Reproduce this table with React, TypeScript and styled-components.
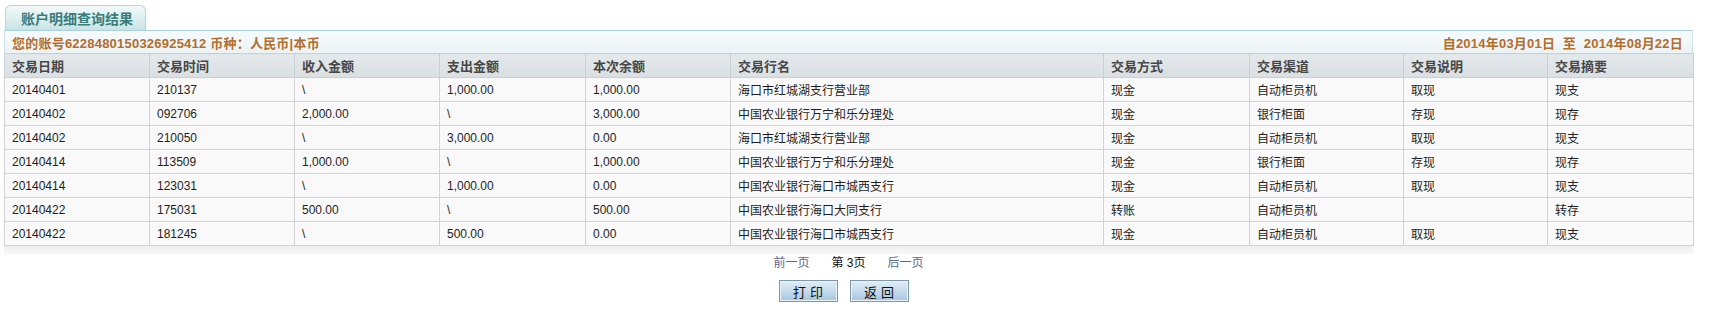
import React from 'react';
import styled, { createGlobalStyle } from 'styled-components';

const GlobalStyle = createGlobalStyle`
  body {
    margin: 0;
    background: #ffffff;
    font-family: "Liberation Sans", Arial, "Noto Sans CJK SC", sans-serif;
  }
`;

const columns = [
  { title: '交易日期', width: 145 },
  { title: '交易时间', width: 145 },
  { title: '收入金额', width: 145 },
  { title: '支出金额', width: 146 },
  { title: '本次余额', width: 145 },
  { title: '交易行名', width: 373 },
  { title: '交易方式', width: 146 },
  { title: '交易渠道', width: 154 },
  { title: '交易说明', width: 144 },
  { title: '交易摘要', width: 146 },
];

const rows = [
  ['20140401', '210137', '\\', '1,000.00', '1,000.00', '海口市红城湖支行营业部', '现金', '自动柜员机', '取现', '现支'],
  ['20140402', '092706', '2,000.00', '\\', '3,000.00', '中国农业银行万宁和乐分理处', '现金', '银行柜面', '存现', '现存'],
  ['20140402', '210050', '\\', '3,000.00', '0.00', '海口市红城湖支行营业部', '现金', '自动柜员机', '取现', '现支'],
  ['20140414', '113509', '1,000.00', '\\', '1,000.00', '中国农业银行万宁和乐分理处', '现金', '银行柜面', '存现', '现存'],
  ['20140414', '123031', '\\', '1,000.00', '0.00', '中国农业银行海口市城西支行', '现金', '自动柜员机', '取现', '现支'],
  ['20140422', '175031', '500.00', '\\', '500.00', '中国农业银行海口大同支行', '转账', '自动柜员机', '', '转存'],
  ['20140422', '181245', '\\', '500.00', '0.00', '中国农业银行海口市城西支行', '现金', '自动柜员机', '取现', '现支'],
];

const Page = styled.div`
  padding: 5px 21px 0 4px;
  width: 1689px;
`;

const TabRow = styled.div`
  display: flex;
  padding-left: 1px;
`;

const Tab = styled.div`
  width: 141px;
  height: 25px;
  box-sizing: border-box;
  padding-left: 15px;
  border: 1px solid #b9d6d6;
  border-bottom: none;
  border-radius: 6px 6px 0 0;
  background: linear-gradient(to bottom, #f2f9f9 0%, #d9eeed 60%, #c8e3e2 100%);
  color: #3b7b79;
  font-size: 14px;
  font-weight: bold;
  line-height: 25px;
  font-family: "Noto Sans CJK SC", sans-serif;
`;

const InfoBar = styled.div`
  display: flex;
  justify-content: space-between;
  align-items: center;
  height: 23px;
  box-sizing: border-box;
  padding: 0 9px 0 7px;
  border-top: 1px solid #a9d1dc;
  border-left: 1px solid #cfe3e8;
  border-right: 1px solid #cfe3e8;
  background: linear-gradient(to bottom, #f8fbfc, #ebf3f6);
  color: #b36d2c;
  font-size: 13px;
  font-weight: bold;
  letter-spacing: 0.22px;
  font-family: "Liberation Sans", Arial, "Noto Sans CJK SC", sans-serif;
  white-space: pre;
`;

const Table = styled.table`
  width: 1689px;
  border-collapse: collapse;
  table-layout: fixed;
`;

const HeadCell = styled.th`
  height: 24px;
  padding: 0 0 0 7px;
  box-sizing: border-box;
  border: 1px solid #c9d0d3;
  background: linear-gradient(to bottom, #e4e9eb, #d9dfe2);
  color: #474747;
  font-size: 13px;
  font-weight: bold;
  text-align: left;
  font-family: "Noto Sans CJK SC", sans-serif;
`;

const Cell = styled.td`
  height: 24px;
  padding: 0 0 0 7px;
  box-sizing: border-box;
  border: 1px solid #d2d2d2;
  background: #f9f9f9;
  color: #1e1e1e;
  font-size: 12px;
  white-space: nowrap;
  overflow: hidden;
`;

const TableShade = styled.div`
  height: 8px;
  background: linear-gradient(to bottom, #efefef, #f8f8f8);
`;

const Pager = styled.div`
  display: flex;
  justify-content: center;
  gap: 22px;
  height: 18px;
  line-height: 18px;
  font-size: 12px;
  font-family: "Liberation Sans", Arial, "Noto Sans CJK SC", sans-serif;
`;

const PagerLink = styled.span<{ current?: boolean }>`
  color: ${({ current }) => (current ? '#111111' : '#5b6890')};
`;

const ButtonRow = styled.div`
  display: flex;
  justify-content: center;
  gap: 12px;
  margin-top: 8px;
  padding-right: 10px;
`;

const Button = styled.button`
  width: 59px;
  height: 22px;
  padding: 0;
  border: 1px solid #7f98a8;
  box-shadow: inset 0 0 0 1px #e8f1f8;
  background: linear-gradient(to bottom, #e0edf6 0%, #c2d9ea 55%, #a8c6dc 100%);
  color: #111111;
  font-size: 13px;
  letter-spacing: 4px;
  text-indent: 4px;
  font-family: "Noto Sans CJK SC", sans-serif;
  cursor: pointer;
`;

const App: React.FC = () => {
  return (
    <Page>
      <GlobalStyle />
      <TabRow>
        <Tab>账户明细查询结果</Tab>
      </TabRow>
      <InfoBar>
        <span>您的账号6228480150326925412 币种：人民币|本币</span>
        <span>自2014年03月01日  至  2014年08月22日</span>
      </InfoBar>
      <Table>
        <colgroup>
          {columns.map((c) => (
            <col key={c.title} style={{ width: c.width }} />
          ))}
        </colgroup>
        <thead>
          <tr>
            {columns.map((c) => (
              <HeadCell key={c.title}>{c.title}</HeadCell>
            ))}
          </tr>
        </thead>
        <tbody>
          {rows.map((r, i) => (
            <tr key={i}>
              {r.map((v, j) => (
                <Cell key={j}>{v}</Cell>
              ))}
            </tr>
          ))}
        </tbody>
      </Table>
      <TableShade />
      <Pager>
        <PagerLink>前一页</PagerLink>
        <PagerLink current>第 3页</PagerLink>
        <PagerLink>后一页</PagerLink>
      </Pager>
      <ButtonRow>
        <Button>打印</Button>
        <Button>返回</Button>
      </ButtonRow>
    </Page>
  );
};

export default App;
